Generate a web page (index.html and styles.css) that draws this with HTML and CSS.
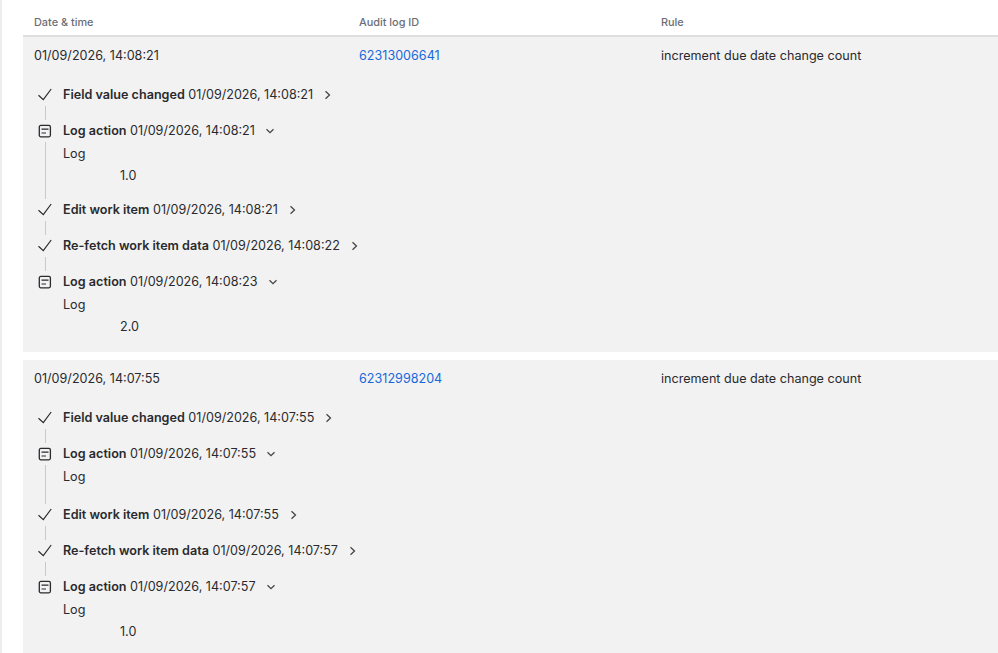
FILE: index.html
```html
<!DOCTYPE html>
<html lang="en">
<head>
<meta charset="utf-8">
<title>Audit log</title>
<link rel="stylesheet" href="styles.css">
</head>
<body>
<svg class="sprites" width="0" height="0" aria-hidden="true">
  <symbol id="check" viewBox="0 0 16 16"><path d="M1.500 8.200 6.300 12.600 14.200 2" fill="none" stroke="currentColor" stroke-width="1.200"/></symbol>
  <symbol id="note" viewBox="0 0 16 16"><rect x="2.300" y="2.400" width="11.100" height="11.400" rx="1.500" fill="none" stroke="currentColor" stroke-width="1.300"/><path d="M4.500 6.200h7M4.500 10h4.500" fill="none" stroke="currentColor" stroke-width="1.200"/></symbol>
  <symbol id="right" viewBox="0 0 12 12"><path d="M3.500 2.200 7.500 6l-4 3.800" fill="none" stroke="currentColor" stroke-width="1.300"/></symbol>
  <symbol id="down" viewBox="0 0 12 12"><path d="M2.500 4.200 6 7.700l3.500-3.500" fill="none" stroke="currentColor" stroke-width="1.300"/></symbol>
</svg>
<div class="strip"></div>
<main class="table">
  <div class="grid header">
    <div>Date &amp; time</div>
    <div>Audit log ID</div>
    <div>Rule</div>
  </div>

  <section class="row">
    <div class="grid summary">
      <div>01/09/2026, 14:08:21</div>
      <div><a class="link" href="#">62313006641</a></div>
      <div>increment due date change count</div>
    </div>
    <div class="steps">
      <div class="step">
        <div class="rail"><svg class="icon"><use href="#check"/></svg><span class="line"></span></div>
        <div class="content"><div class="head"><b>Field value changed</b> 01/09/2026, 14:08:21<svg class="chev"><use href="#right"/></svg></div></div>
      </div>
      <div class="step">
        <div class="rail"><svg class="icon"><use href="#note"/></svg><span class="line"></span></div>
        <div class="content"><div class="head"><b>Log action</b> 01/09/2026, 14:08:21<svg class="chev"><use href="#down"/></svg></div>
          <div class="label">Log</div><div class="value">1.0</div></div>
      </div>
      <div class="step">
        <div class="rail"><svg class="icon"><use href="#check"/></svg><span class="line"></span></div>
        <div class="content"><div class="head"><b>Edit work item</b> 01/09/2026, 14:08:21<svg class="chev"><use href="#right"/></svg></div></div>
      </div>
      <div class="step">
        <div class="rail"><svg class="icon"><use href="#check"/></svg><span class="line"></span></div>
        <div class="content"><div class="head"><b>Re-fetch work item data</b> 01/09/2026, 14:08:22<svg class="chev"><use href="#right"/></svg></div></div>
      </div>
      <div class="step">
        <div class="rail"><svg class="icon"><use href="#note"/></svg></div>
        <div class="content"><div class="head"><b>Log action</b> 01/09/2026, 14:08:23<svg class="chev"><use href="#down"/></svg></div>
          <div class="label">Log</div><div class="value">2.0</div></div>
      </div>
    </div>
  </section>

  <section class="row">
    <div class="grid summary">
      <div>01/09/2026, 14:07:55</div>
      <div><a class="link" href="#">62312998204</a></div>
      <div>increment due date change count</div>
    </div>
    <div class="steps">
      <div class="step">
        <div class="rail"><svg class="icon"><use href="#check"/></svg><span class="line"></span></div>
        <div class="content"><div class="head"><b>Field value changed</b> 01/09/2026, 14:07:55<svg class="chev"><use href="#right"/></svg></div></div>
      </div>
      <div class="step">
        <div class="rail"><svg class="icon"><use href="#note"/></svg><span class="line"></span></div>
        <div class="content"><div class="head"><b>Log action</b> 01/09/2026, 14:07:55<svg class="chev"><use href="#down"/></svg></div>
          <div class="label">Log</div></div>
      </div>
      <div class="step">
        <div class="rail"><svg class="icon"><use href="#check"/></svg><span class="line"></span></div>
        <div class="content"><div class="head"><b>Edit work item</b> 01/09/2026, 14:07:55<svg class="chev"><use href="#right"/></svg></div></div>
      </div>
      <div class="step">
        <div class="rail"><svg class="icon"><use href="#check"/></svg><span class="line"></span></div>
        <div class="content"><div class="head"><b>Re-fetch work item data</b> 01/09/2026, 14:07:57<svg class="chev"><use href="#right"/></svg></div></div>
      </div>
      <div class="step">
        <div class="rail"><svg class="icon"><use href="#note"/></svg></div>
        <div class="content"><div class="head"><b>Log action</b> 01/09/2026, 14:07:57<svg class="chev"><use href="#down"/></svg></div>
          <div class="label">Log</div><div class="value">1.0</div></div>
      </div>
    </div>
  </section>
</main>
</body>
</html>
```
FILE: styles.css
```css
* { box-sizing: border-box; }
html, body { height: 100%; }
body {
  margin: 0;
  display: flex;
  overflow: hidden;
  background: #fff;
  color: #292a2e;
  font: 400 12.6px/20px Inter, "Liberation Sans", sans-serif;
}
.sprites { position: absolute; }
.strip { flex: 0 0 2px; background: #ededed; }
.table { flex: 1; padding-left: 21px; min-width: 0; }
.grid {
  display: grid;
  grid-template-columns: 325px 302px 1fr;
  padding-left: 11px;
}
.header {
  height: 37px;
  padding-top: 12px;
  border-bottom: 2px solid #dfdfdf;
  color: #6b6e76;
  font-size: 10.9px;
  font-weight: 500;
  line-height: 20px;
}
.row { background: #f2f2f2; padding: 9px 0 1px; margin-bottom: 8px; }
.link { color: #1868db; text-decoration: none; }
.steps { padding: 19px 0 0 11px; }
.step { display: flex; }
.rail {
  flex: 0 0 22px;
  margin-right: 7px;
  display: flex;
  flex-direction: column;
  align-items: center;
  color: #292a2e;
}
.icon { width: 16px; height: 20px; flex: none; display: block; }
.line { flex: 1; width: 1px; margin: 1px 0; background: #c9c9c9; }
.content { padding-bottom: 14px; }
.head { margin-bottom: 2px; display: flex; align-items: center; white-space: pre; }
.head b { font-weight: 600; }
.chev { width: 12px; height: 12px; margin-left: 9px; color: #44464c; }
.label { margin: 3px 0 4px; }
.value { margin-top: -2px; padding-left: 57px; }
```
